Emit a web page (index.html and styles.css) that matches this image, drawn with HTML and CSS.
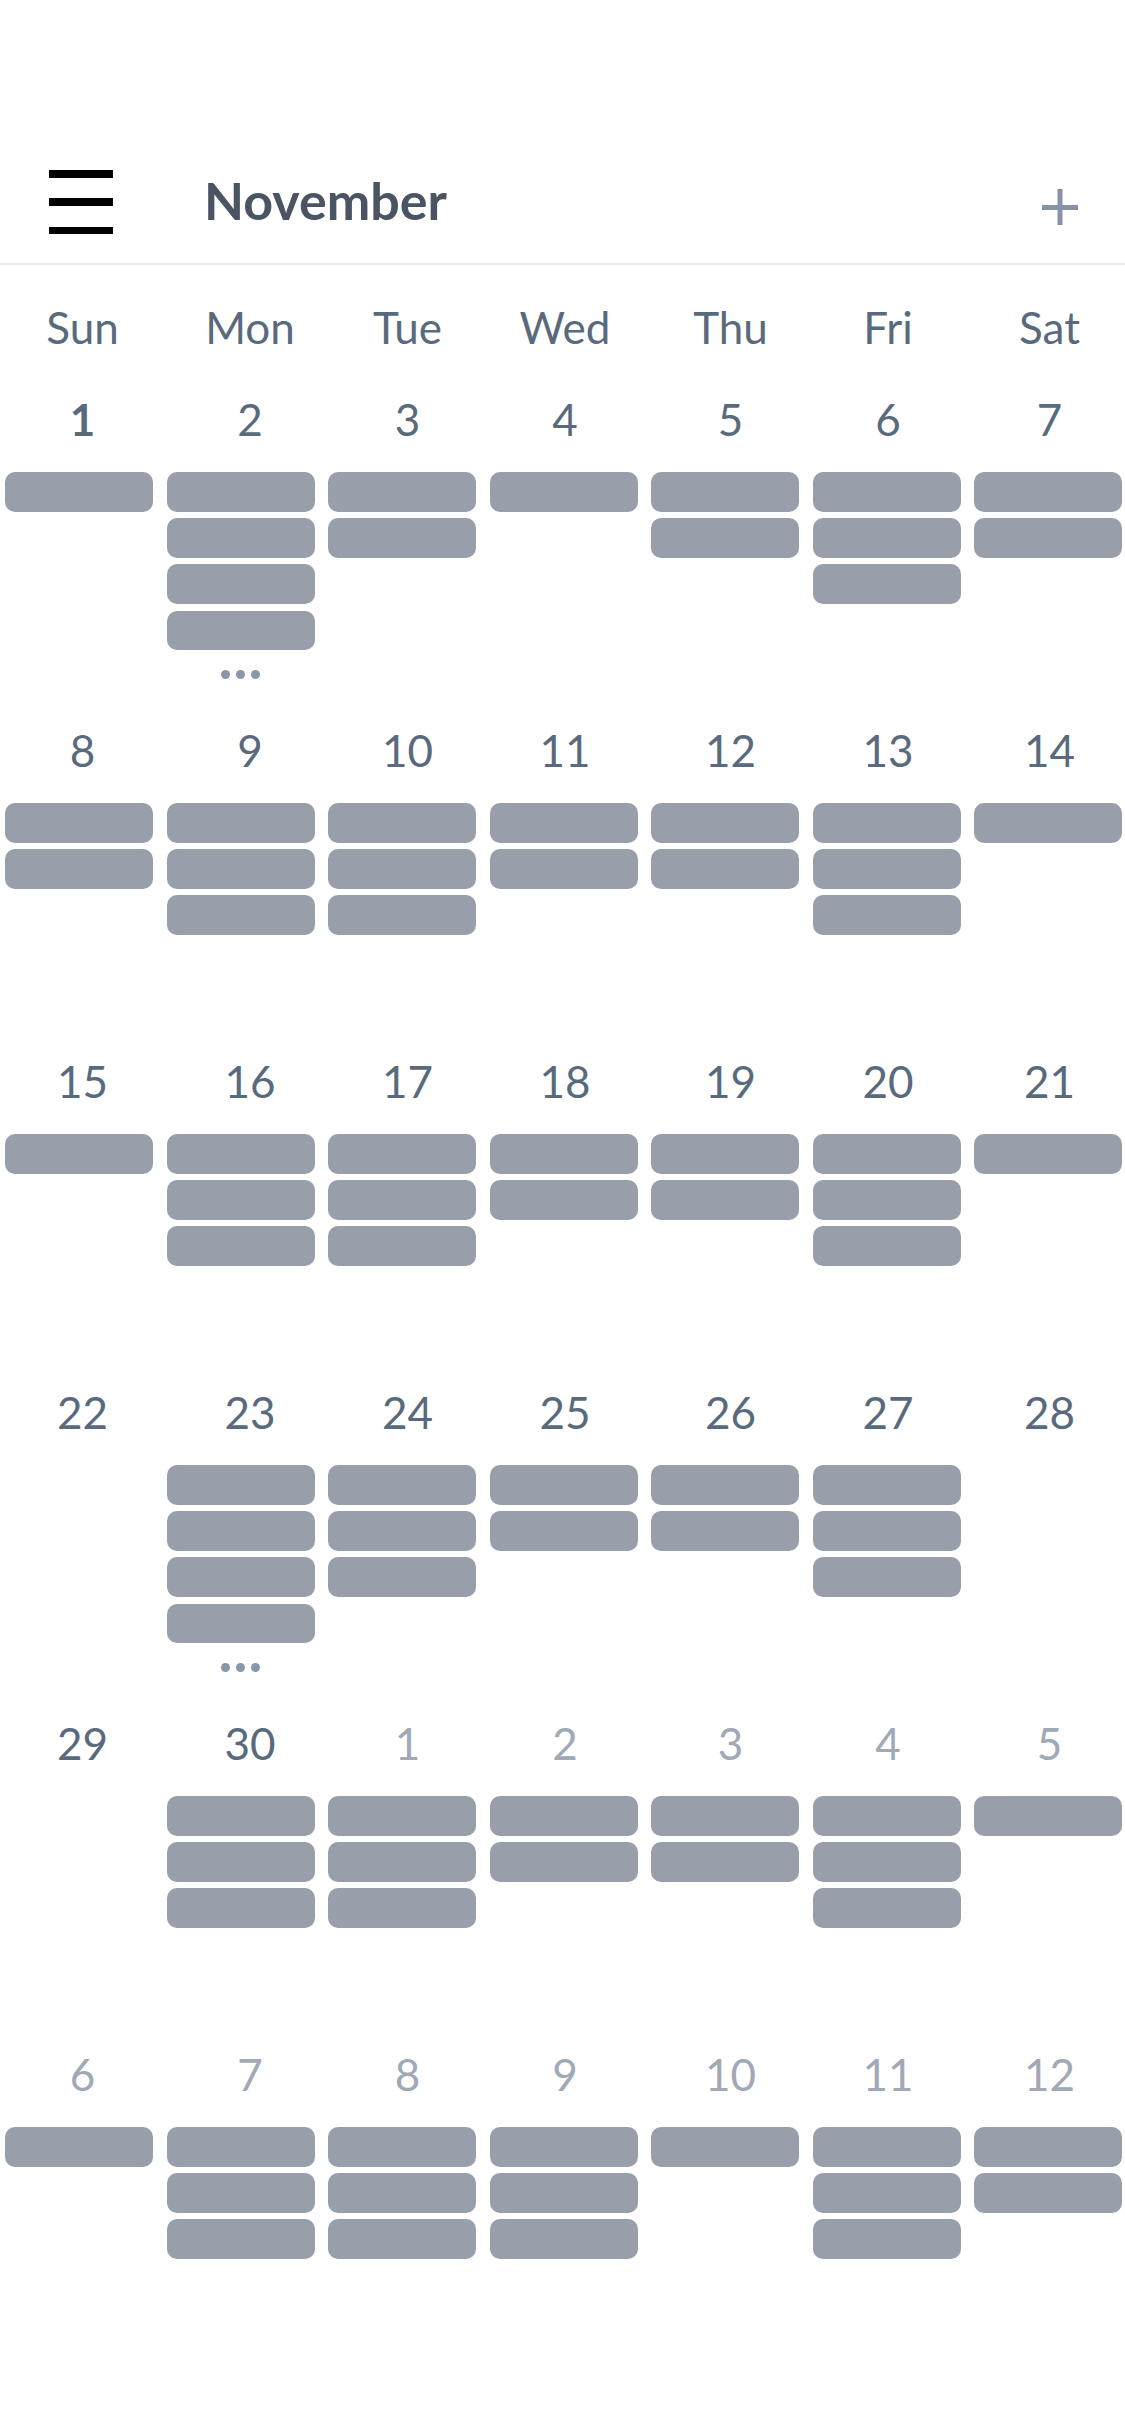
FILE: index.html
```html
<!DOCTYPE html>
<html lang="en">
<head>
<meta charset="utf-8">
<title>November</title>
<link rel="stylesheet" href="styles.css">
</head>
<body>
<div class="app">
  <header class="header">
    <div class="burger"><span></span><span></span><span></span></div>
    <h1 class="title">November</h1>
    <svg class="plus" width="36" height="36" viewBox="0 0 36 36"><rect x="15.5" y="0" width="5" height="36" fill="#8592a7"/><rect x="0" y="16" width="36" height="5" fill="#8592a7"/></svg>
  </header>
  <div class="divider"></div>
  <div class="grid weekdays">
    <div class="wd">Sun</div><div class="wd">Mon</div><div class="wd">Tue</div><div class="wd">Wed</div><div class="wd">Thu</div><div class="wd">Fri</div><div class="wd">Sat</div>
  </div>

  <div class="grid week">
    <div class="cell"><div class="date today">1</div><div class="bars"><i></i></div></div>
    <div class="cell"><div class="date">2</div><div class="bars"><i></i><i></i><i></i><i></i></div><div class="more"><b></b><b></b><b></b></div></div>
    <div class="cell"><div class="date">3</div><div class="bars"><i></i><i></i></div></div>
    <div class="cell"><div class="date">4</div><div class="bars"><i></i></div></div>
    <div class="cell"><div class="date">5</div><div class="bars"><i></i><i></i></div></div>
    <div class="cell"><div class="date">6</div><div class="bars"><i></i><i></i><i></i></div></div>
    <div class="cell"><div class="date">7</div><div class="bars"><i></i><i></i></div></div>
  </div>

  <div class="grid week">
    <div class="cell"><div class="date">8</div><div class="bars"><i></i><i></i></div></div>
    <div class="cell"><div class="date">9</div><div class="bars"><i></i><i></i><i></i></div></div>
    <div class="cell"><div class="date">10</div><div class="bars"><i></i><i></i><i></i></div></div>
    <div class="cell"><div class="date">11</div><div class="bars"><i></i><i></i></div></div>
    <div class="cell"><div class="date">12</div><div class="bars"><i></i><i></i></div></div>
    <div class="cell"><div class="date">13</div><div class="bars"><i></i><i></i><i></i></div></div>
    <div class="cell"><div class="date">14</div><div class="bars"><i></i></div></div>
  </div>

  <div class="grid week">
    <div class="cell"><div class="date">15</div><div class="bars"><i></i></div></div>
    <div class="cell"><div class="date">16</div><div class="bars"><i></i><i></i><i></i></div></div>
    <div class="cell"><div class="date">17</div><div class="bars"><i></i><i></i><i></i></div></div>
    <div class="cell"><div class="date">18</div><div class="bars"><i></i><i></i></div></div>
    <div class="cell"><div class="date">19</div><div class="bars"><i></i><i></i></div></div>
    <div class="cell"><div class="date">20</div><div class="bars"><i></i><i></i><i></i></div></div>
    <div class="cell"><div class="date">21</div><div class="bars"><i></i></div></div>
  </div>

  <div class="grid week">
    <div class="cell"><div class="date">22</div><div class="bars"></div></div>
    <div class="cell"><div class="date">23</div><div class="bars"><i></i><i></i><i></i><i></i></div><div class="more"><b></b><b></b><b></b></div></div>
    <div class="cell"><div class="date">24</div><div class="bars"><i></i><i></i><i></i></div></div>
    <div class="cell"><div class="date">25</div><div class="bars"><i></i><i></i></div></div>
    <div class="cell"><div class="date">26</div><div class="bars"><i></i><i></i></div></div>
    <div class="cell"><div class="date">27</div><div class="bars"><i></i><i></i><i></i></div></div>
    <div class="cell"><div class="date">28</div><div class="bars"></div></div>
  </div>

  <div class="grid week">
    <div class="cell"><div class="date">29</div><div class="bars"></div></div>
    <div class="cell"><div class="date">30</div><div class="bars"><i></i><i></i><i></i></div></div>
    <div class="cell"><div class="date other">1</div><div class="bars"><i></i><i></i><i></i></div></div>
    <div class="cell"><div class="date other">2</div><div class="bars"><i></i><i></i></div></div>
    <div class="cell"><div class="date other">3</div><div class="bars"><i></i><i></i></div></div>
    <div class="cell"><div class="date other">4</div><div class="bars"><i></i><i></i><i></i></div></div>
    <div class="cell"><div class="date other">5</div><div class="bars"><i></i></div></div>
  </div>

  <div class="grid week">
    <div class="cell"><div class="date other">6</div><div class="bars"><i></i></div></div>
    <div class="cell"><div class="date other">7</div><div class="bars"><i></i><i></i><i></i></div></div>
    <div class="cell"><div class="date other">8</div><div class="bars"><i></i><i></i><i></i></div></div>
    <div class="cell"><div class="date other">9</div><div class="bars"><i></i><i></i><i></i></div></div>
    <div class="cell"><div class="date other">10</div><div class="bars"><i></i></div></div>
    <div class="cell"><div class="date other">11</div><div class="bars"><i></i><i></i><i></i></div></div>
    <div class="cell"><div class="date other">12</div><div class="bars"><i></i><i></i></div></div>
  </div>
</div>
</body>
</html>
```

FILE: styles.css
```css
* { box-sizing: border-box; }
html, body {
  margin: 0;
  padding: 0;
  background: #ffffff;
}
body {
  font-family: Lato, "Open Sans", "Liberation Sans", sans-serif;
  width: 1125px;
  min-height: 2436px;
}
.app {
  width: 1125px;
}
.header {
  display: flex;
  align-items: center;
  padding: 170px 47px 0 49px;
  height: 234px;
}
.burger {
  width: 64px;
  height: 64px;
  display: flex;
  flex-direction: column;
  justify-content: space-between;
  flex: none;
}
.burger span {
  display: block;
  height: 7.5px;
  background: #000;
}
.title {
  margin: 0 0 4px 91px;
  font-size: 52px;
  line-height: 52px;
  font-weight: 700;
  color: #4a5462;
  flex: 1;
}
.plus {
  flex: none;
  margin-top: 10px;
}
.divider {
  margin-top: 29px;
  height: 2px;
  background: #e8ecf1;
}
.grid {
  display: grid;
  grid-template-columns: repeat(7, 1fr);
  column-gap: 13.5px;
  padding: 0 3px 0 5px;
}
.weekdays {
  margin-top: 40px;
  font-size: 44px;
  line-height: 44px;
  color: #5a6a7d;
  text-align: center;
}
.week {
  height: 331px;
  align-items: start;
}
.weekdays + .week {
  margin-top: 47.7px;
}
.cell {
  display: flex;
  flex-direction: column;
  align-items: stretch;
}
.date {
  font-size: 44px;
  line-height: 44px;
  color: #5a6a7d;
  text-align: center;
  margin-bottom: 31.3px;
}
/* label centres in the reference sit slightly right of the bar columns */
.wd:nth-child(1), .cell:nth-child(1) .date { padding-left: 7px; }
.wd:nth-child(2), .cell:nth-child(2) .date { padding-left: 19px; }
.wd:nth-child(3), .cell:nth-child(3) .date { padding-left: 11px; }
.wd:nth-child(4), .cell:nth-child(4) .date { padding-left: 3px; }
.wd:nth-child(5), .cell:nth-child(5) .date { padding-left: 11px; }
.wd:nth-child(6), .cell:nth-child(6) .date { padding-left: 3px; }
.wd:nth-child(7), .cell:nth-child(7) .date { padding-left: 3px; }
.date.today {
  font-weight: 700;
}
.date.other {
  color: #a0a9b5;
}
.bars {
  display: flex;
  flex-direction: column;
  gap: 6.4px;
}
.bars i {
  display: block;
  height: 39.8px;
  border-radius: 10px;
  background: #989fab;
}
.more {
  display: flex;
  justify-content: center;
  gap: 6px;
  margin-top: 20px;
}
.more b {
  display: block;
  width: 9px;
  height: 9px;
  border-radius: 50%;
  background: #8a96aa;
}
```
